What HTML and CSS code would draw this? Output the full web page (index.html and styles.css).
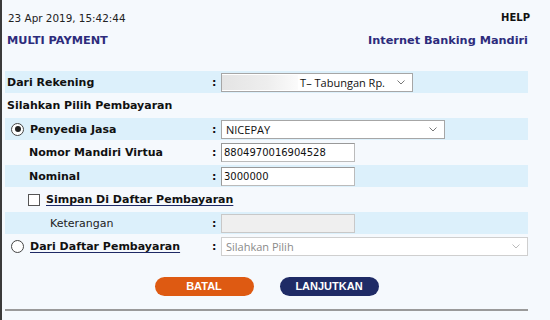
FILE: index.html
```html
<!DOCTYPE html>
<html lang="id">

<head>
  <meta charset="UTF-8">
  <title>Multi Payment</title>
  <link rel="stylesheet" href="styles.css">
</head>

<body>
  <div class="page">
    <div class="head-row">
      <span class="date">23 Apr 2019, 15:42:44</span>
      <a class="help">HELP</a>
    </div>
    <div class="title-row">
      <span class="title">MULTI PAYMENT</span>
      <span class="title">Internet Banking Mandiri</span>
    </div>

    <div class="form">
      <div class="row band">
        <div class="label lvl0 bold">Dari Rekening</div>
        <div class="colon">:</div>
        <div class="select w-rek">
          <span class="masked"></span>
          <span class="opt">T– Tabungan Rp.</span>
          <svg class="chev" width="8" height="5" viewBox="0 0 8 5"><path d="M0.5 0.5 L4 4 L7.5 0.5" fill="none" stroke="#777" stroke-width="1" /></svg>
        </div>
      </div>

      <div class="row">
        <div class="label lvl0 bold">Silahkan Pilih Pembayaran</div>
      </div>

      <div class="row band">
        <div class="label bold">
          <span class="radio checked"></span>
          Penyedia Jasa
        </div>
        <div class="colon">:</div>
        <div class="select w-jasa">
          <span class="opt">NICEPAY</span>
          <svg class="chev" width="8" height="5" viewBox="0 0 8 5"><path d="M0.5 0.5 L4 4 L7.5 0.5" fill="none" stroke="#777" stroke-width="1" /></svg>
        </div>
      </div>

      <div class="row">
        <div class="label lvl1 bold">Nomor Mandiri Virtua</div>
        <div class="colon">:</div>
        <input class="field" type="text" value="8804970016904528">
      </div>

      <div class="row band">
        <div class="label lvl1 bold">Nominal</div>
        <div class="colon">:</div>
        <input class="field" type="text" value="3000000">
      </div>

      <div class="row">
        <div class="label lvl1b bold">
          <span class="check"></span>
          <a class="link">Simpan Di Daftar Pembayaran</a>
        </div>
      </div>

      <div class="row band">
        <div class="label lvl2">Keterangan</div>
        <div class="colon">:</div>
        <input class="field" type="text" disabled>
      </div>

      <div class="row">
        <div class="label bold">
          <span class="radio"></span>
          <a class="link">Dari Daftar Pembayaran</a>
        </div>
        <div class="colon">:</div>
        <div class="select w-daftar disabled">
          <span class="opt">Silahkan Pilih</span>
          <svg class="chev" width="8" height="5" viewBox="0 0 8 5"><path d="M0.5 0.5 L4 4 L7.5 0.5" fill="none" stroke="#bbb" stroke-width="1" /></svg>
        </div>
      </div>
    </div>

    <div class="actions">
      <button class="btn btn-batal">BATAL</button>
      <button class="btn btn-lanjut">LANJUTKAN</button>
    </div>

    <hr class="rule">
  </div>
</body>

</html>
```

FILE: styles.css
```css
body {
  margin: 0;
  background: #f5f9fd;
  border-left: 2px solid #3a3a3a;
  height: 320px;
  box-sizing: border-box;
  font-family: "DejaVu Sans", Verdana, sans-serif;
  color: #111;
  overflow: hidden;
}

.page {
  width: 523px;
  margin-left: 3px;
  padding-top: 11px;
}

.head-row {
  display: flex;
  justify-content: space-between;
  align-items: center;
  height: 13px;
  padding-left: 3px;
  margin-right: -2px;
}

.date {
  font-size: 10.4px;
  color: #222;
}

.help {
  font-size: 10px;
  font-weight: bold;
  color: #111;
}

.title-row {
  display: flex;
  justify-content: space-between;
  align-items: center;
  height: 14px;
  margin-top: 9px;
  padding-left: 2px;
}

.title {
  font-size: 11.3px;
  font-weight: bold;
  color: #2d2c7c;
}

.form {
  margin-top: 24px;
  font-size: 11px;
}

.row {
  display: flex;
  align-items: center;
  height: 22px;
  margin-bottom: 1.5px;
}

.band {
  background: #dcf0fb;
}

.bold {
  font-weight: bold;
}

.label {
  width: 204px;
  display: flex;
  align-items: center;
  gap: 6px;
  padding-left: 6px;
  box-sizing: border-box;
  white-space: nowrap;
}

.lvl0 {
  padding-left: 2px;
}

.lvl1 {
  padding-left: 24px;
}

.lvl1b {
  padding-left: 23px;
}

.lvl2 {
  padding-left: 45px;
  font-weight: normal;
  color: #222;
}

.colon {
  width: 12px;
  font-weight: bold;
  text-align: left;
  padding-left: 3px;
  box-sizing: border-box;
}

.radio {
  width: 13px;
  height: 13px;
  border: 1.5px solid #444;
  border-radius: 50%;
  box-sizing: border-box;
  background: #fff;
  display: inline-flex;
  align-items: center;
  justify-content: center;
  flex: none;
}

.radio.checked::after {
  content: "";
  width: 6px;
  height: 6px;
  border-radius: 50%;
  background: #222;
}

.check {
  width: 12px;
  height: 12px;
  border: 1px solid #555;
  box-sizing: border-box;
  background: #fff;
  flex: none;
}

.link {
  color: #111;
  text-decoration: underline;
  text-decoration-color: #1e2a66;
  text-underline-offset: 2px;
}

.select {
  height: 19px;
  border: 1px solid #a6a6a6;
  background: #fff;
  box-sizing: border-box;
  display: flex;
  align-items: center;
  padding: 0 7px 0 4px;
  font-family: "Open Sans", "Noto Sans", sans-serif;
  font-size: 11px;
  color: #111;
}

.select .opt {
  flex: 1;
  white-space: nowrap;
}

.chev {
  flex: none;
}

.w-rek {
  width: 192px;
  padding-left: 0;
}

.w-rek .opt {
  text-align: right;
  padding-right: 12px;
}

.masked {
  width: 76px;
  height: 15px;
  background: linear-gradient(to right, #e4e4e4, #eeeeee 60%, #fbfbfb);
  flex: none;
}

.w-jasa {
  width: 224px;
}

.w-daftar {
  width: 307px;
}

.select.disabled {
  border-color: #cfcfcf;
  color: #8a8a8a;
}

.field {
  width: 134px;
  height: 19px;
  margin: 0;
  border: 1px solid #999;
  border-right-color: #bbb;
  border-bottom-color: #bbb;
  box-sizing: border-box;
  padding: 0 2px;
  font-family: "DejaVu Sans", Verdana, sans-serif;
  font-size: 10px;
  color: #111;
  background: #fff;
}

.field:disabled {
  background: #efefef;
  border-color: #c8c8c8;
}

.actions {
  display: flex;
  justify-content: center;
  gap: 26px;
  margin-top: 19px;
}

.btn {
  width: 99px;
  height: 19px;
  border: none;
  border-radius: 10px;
  color: #fff;
  font-family: "Liberation Sans", Arial, sans-serif;
  font-weight: bold;
  font-size: 11px;
  padding: 0;
}

.btn-batal {
  background: #de5a12;
}

.btn-lanjut {
  background: #1f2b66;
}

.rule {
  margin: 13px 0 0;
  border: none;
  border-top: 2px solid #9a9a9a;
  height: 0;
}
```
